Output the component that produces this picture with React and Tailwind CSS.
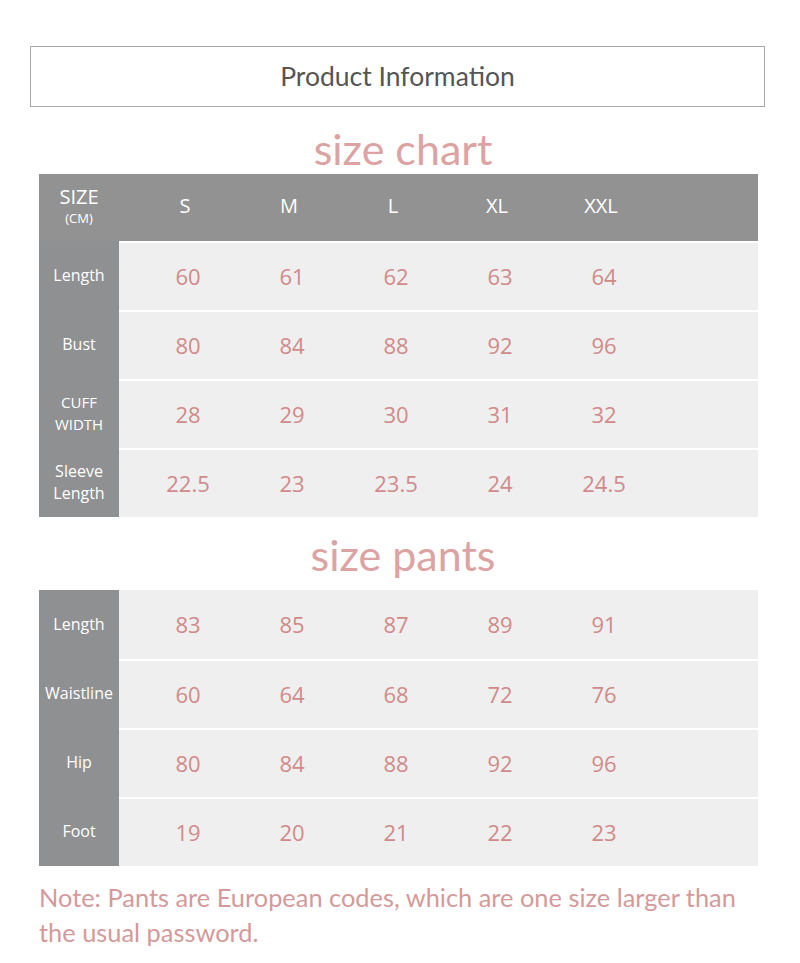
const sizes = ["S", "M", "L", "XL", "XXL"];

const chart = [
  { label: ["Length"], values: ["60", "61", "62", "63", "64"] },
  { label: ["Bust"], values: ["80", "84", "88", "92", "96"] },
  { label: ["CUFF", "WIDTH"], values: ["28", "29", "30", "31", "32"], small: true },
  { label: ["Sleeve", "Length"], values: ["22.5", "23", "23.5", "24", "24.5"] },
];

const pants = [
  { label: ["Length"], values: ["83", "85", "87", "89", "91"] },
  { label: ["Waistline"], values: ["60", "64", "68", "72", "76"] },
  { label: ["Hip"], values: ["80", "84", "88", "92", "96"] },
  { label: ["Foot"], values: ["19", "20", "21", "22", "23"] },
];

function Row({ row, first }) {
  return (
    <div className="flex h-[69px]">
      <div className="flex w-[80px] flex-col items-center justify-center bg-[#8f9091] pb-[1px] text-white leading-[22px]">
        {row.label.map((l) => (
          <span key={l} className={row.small ? "text-[15px]" : "text-[16px]"}>
            {l}
          </span>
        ))}
      </div>
      <div
        className={
          "flex flex-1 items-center bg-[#efefef] pl-[17px] " +
          (first ? "" : "border-t-2 border-white")
        }
      >
        {row.values.map((v, i) => (
          <div key={i} className="w-[104px] text-center text-[22px] text-[#d08a8a]">
            {v}
          </div>
        ))}
      </div>
    </div>
  );
}

function Title({ children }) {
  return (
    <div className="pl-[6px] text-center text-[43px] leading-[46px] text-[#dca3a3] font-['Lato',sans-serif]">
      {children}
    </div>
  );
}

export default function App() {
  return (
    <div className="h-[963px] w-[800px] bg-white pt-[46px] font-['Open_Sans',sans-serif]">
      <div className="ml-[30px] flex h-[61px] w-[735px] items-center justify-center border border-[#aaaaaa] font-['Lato',sans-serif] text-[26.5px] text-[#555555]">
        Product Information
      </div>

      <div className="mt-[19px]">
        <Title>size chart</Title>
      </div>

      <div className="ml-[39px] mt-[2px] w-[719px]">
        <div className="flex h-[67px] bg-[#929292] pb-[3px] text-white">
          <div className="flex w-[80px] flex-col items-center justify-center">
            <span className="text-[20px] leading-[22px]">SIZE</span>
            <span className="mt-[2px] text-[13px] leading-[16px]">(CM)</span>
          </div>
          <div className="flex flex-1 items-center pl-[14px]">
            {sizes.map((s) => (
              <div key={s} className="w-[104px] text-center text-[20px]">
                {s}
              </div>
            ))}
          </div>
        </div>
        {chart.map((r, i) => (
          <Row key={i} row={r} />
        ))}
      </div>

      <div className="mt-[15px]">
        <Title>size pants</Title>
      </div>

      <div className="ml-[39px] mt-[12px] w-[719px]">
        {pants.map((r, i) => (
          <Row key={i} row={r} first={i === 0} />
        ))}
      </div>

      <p className="ml-[39px] mt-[14px] w-[720px] font-['Lato',sans-serif] text-[25.4px] leading-[35px] text-[#d49a9a]">
        Note: Pants are European codes, which are one size larger than
        <br />
        the usual password.
      </p>
    </div>
  );
}
